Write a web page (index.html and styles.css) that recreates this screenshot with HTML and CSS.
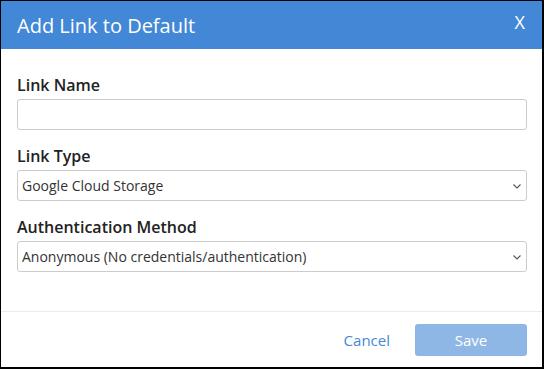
FILE: index.html
```html
<!DOCTYPE html>
<html lang="en">
<head>
  <meta charset="UTF-8"/>
  <title>Add Link to Default</title>
  <link rel="stylesheet" href="styles.css">
</head>
<body>
  <div class="modal">
    <div class="modal-header">
      <h1>Add Link to Default</h1>
      <span class="close">X</span>
    </div>
    <div class="modal-body">
      <div class="field">
        <label for="linkName">Link Name</label>
        <input type="text" id="linkName" class="control">
      </div>
      <div class="field">
        <label for="linkType">Link Type</label>
        <div class="select-wrap">
          <select id="linkType" class="control">
            <option>Google Cloud Storage</option>
          </select>
          <svg class="chevron" width="8" height="5" viewBox="0 0 8 5"><path d="M0.5 0.5 L4 4 L7.5 0.5" fill="none" stroke="#555" stroke-width="1.1"/></svg>
        </div>
      </div>
      <div class="field">
        <label for="authMethod">Authentication Method</label>
        <div class="select-wrap">
          <select id="authMethod" class="control">
            <option>Anonymous (No credentials/authentication)</option>
          </select>
          <svg class="chevron" width="8" height="5" viewBox="0 0 8 5"><path d="M0.5 0.5 L4 4 L7.5 0.5" fill="none" stroke="#555" stroke-width="1.1"/></svg>
        </div>
      </div>
    </div>
    <div class="modal-footer">
      <button class="btn-link">Cancel</button>
      <button class="btn-primary" disabled>Save</button>
    </div>
  </div>
</body>
</html>
```

FILE: styles.css
```css
:root {
  --blue: #4388d6;
  --blue-disabled: #8fb7e6;
  --border: #cccccc;
  --text: #222222;
}

*, *::before, *::after { box-sizing: border-box; }

body {
  margin: 0;
  font-family: 'Open Sans', sans-serif;
  color: var(--text);
  background: #fff;
}

.modal {
  width: 544px;
  height: 369px;
  border: solid #000;
  border-width: 1px 2px 2px 1px;
  display: flex;
  flex-direction: column;
  background: #fff;
}

.modal-header {
  height: 48px;
  background: var(--blue);
  color: #fff;
  display: flex;
  align-items: center;
  justify-content: space-between;
  padding: 0 17px 0 16px;
}

.modal-header h1 {
  margin: 0;
  font-size: 20px;
  font-weight: 400;
  line-height: 1;
  padding-top: 1px;
}

.close {
  font-size: 18px;
  line-height: 1;
  margin-top: -7px;
}

.modal-body {
  flex: 1;
  padding: 25px 15px 0 16px;
}

.field {
  margin-bottom: 15px;
}

.field label {
  display: block;
  font-size: 16px;
  font-weight: 600;
  line-height: 22px;
  margin-bottom: 3px;
}

.control {
  display: block;
  width: 100%;
  height: 31px;
  border: 1px solid var(--border);
  border-radius: 3px;
  background: #fff;
  font: 14px 'Open Sans', sans-serif;
  color: #333;
  padding: 0 4px;
  outline: none;
}

.select-wrap {
  position: relative;
}

.select-wrap select {
  appearance: none;
  -webkit-appearance: none;
  padding-right: 24px;
}

.chevron {
  position: absolute;
  right: 6px;
  top: 14px;
  pointer-events: none;
}

.modal-footer {
  border-top: 1px solid #ebebeb;
  height: 56px;
  display: flex;
  align-items: center;
  justify-content: flex-end;
  padding: 0 15px 0 16px;
}

.btn-link {
  border: none;
  background: none;
  color: var(--blue);
  font: 15px 'Open Sans', sans-serif;
  padding: 0;
  margin-right: 25px;
  cursor: pointer;
}

.btn-primary {
  width: 112px;
  height: 32px;
  border: none;
  border-radius: 3px;
  background: var(--blue-disabled);
  color: #fff;
  font: 15px 'Open Sans', sans-serif;
}
```
